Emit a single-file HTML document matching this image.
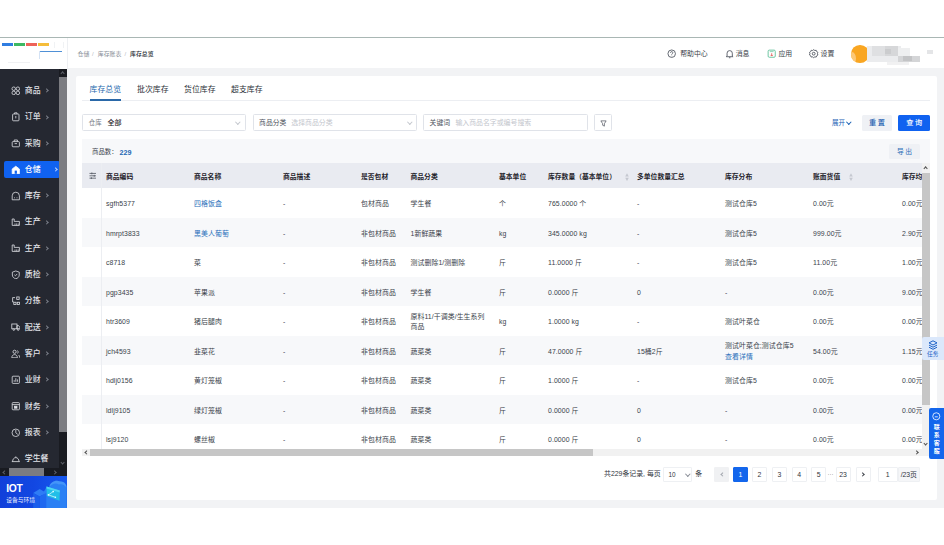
<!DOCTYPE html>
<html lang="zh-CN">
<head>
<meta charset="utf-8">
<title>库存总览</title>
<style>
*{box-sizing:border-box;margin:0;padding:0}
html,body{width:944px;height:545px;overflow:hidden;background:#fff}
body{position:relative;font-family:"Liberation Sans","Noto Sans CJK SC",sans-serif;color:#303540;font-size:6.9px;line-height:1}
.abs{position:absolute}
i{font-style:normal}
#topline{left:0;top:37px;width:944px;height:1px;background:#a9b7b4}
#hdr{left:0;top:38px;width:944px;height:30px;background:#fff}
#logo{left:0;top:38px;width:67.5px;height:31px;background:#fff;border-right:1px solid #eef0f3}
#mainbg{left:67px;top:68px;width:877px;height:440px;background:#f2f3f5}
#side{left:0;top:69px;width:67px;height:407px;background:#252831;overflow:hidden}
.mi{position:absolute;left:4px;width:56px;height:17px;border-radius:2px;color:#e1e3e8;font-size:7.9px}
.mi svg{position:absolute;left:6.6px;top:3.8px;width:9.6px;height:9.6px;fill:none;stroke:#dfe1e6;stroke-width:1}
.mi span{position:absolute;left:20.8px;top:0;line-height:17px;white-space:nowrap;font-weight:500}
.mi .chev{position:absolute;left:41.3px;top:7.3px;width:3.2px;height:3.2px;border-top:0.8px solid #7a7e88;border-right:0.8px solid #7a7e88;transform:rotate(45deg)}
.mi.act{background:#1062f0;color:#fff}
.mi.act .chev{border-color:#b9d2ff;left:49.5px}
.mi.act svg{stroke:#fff}
#card{left:75.5px;top:76px;width:861px;height:424px;background:#fff;border-radius:2px}
.tab{position:absolute;top:86px;font-size:7.9px;color:#2b2f38;white-space:nowrap}
.bc{position:absolute;top:51.6px;font-size:5.9px;color:#8a8f99;white-space:nowrap}
.inp{position:absolute;top:114.3px;height:16.8px;border:0.6px solid #e0e3e9;border-radius:1.5px;background:#fff;font-size:6.5px;line-height:16.6px;white-space:nowrap}
.inp b{font-weight:400;color:#4d525c;position:absolute;left:5.6px;font-size:6.8px}
.inp em{font-style:normal;color:#c3c6cd;position:absolute;font-size:6.9px}
.inp s{text-decoration:none;color:#1f2329;position:absolute;font-size:7px;font-weight:500}
.dchev{position:absolute;width:3.6px;height:3.6px;border-right:0.7px solid #c4c7ce;border-bottom:0.7px solid #c4c7ce;transform:rotate(45deg)}
.hi{position:absolute;top:49.2px;font-size:6.9px;color:#3a3f4a;white-space:nowrap;line-height:10px}
.hi svg{position:absolute;top:0.3px;width:9.4px;height:9.4px;fill:none;stroke:#4a4f5a;stroke-width:0.9}
#tbl{left:82px;top:163px;width:839.5px;height:285.5px;overflow:hidden;background:#fff}
.thead{position:absolute;left:0;top:0;width:100%;height:25px;background:#e9ebf1}
.th{position:absolute;top:0.6px;line-height:25.5px;font-weight:700;color:#1f232b;font-size:6.8px;white-space:nowrap}
.tr{position:absolute;left:0;width:100%;height:29.5px;background:#fff}
.tr.odd{background:#f7f8fa}
.td{position:absolute;top:1.1px;line-height:29.5px;white-space:nowrap;color:#3a3f4a;font-size:6.9px;letter-spacing:0.08px}
.td.two{line-height:9.8px;top:6.05px}
.td.two2{line-height:11.3px;top:4.55px}
.lk{color:#2a70ba}
.pg{position:absolute;top:467.3px;width:15px;height:14.7px;border:0.6px solid #eef0f3;border-radius:1px;font-size:6.9px;line-height:13.8px;text-align:center;color:#30343c;background:#fff}
</style>
</head>
<body>
<div class="abs" id="hdr"></div>
<div class="abs" id="mainbg"></div>
<div class="abs" id="topline"></div>

<!-- logo -->
<div class="abs" id="logo">
  <div class="abs" style="left:2px;top:4.5px;width:11px;height:3.6px;background:#2f7de1"></div>
  <div class="abs" style="left:14px;top:4.5px;width:11px;height:3.6px;background:#3cb862"></div>
  <div class="abs" style="left:26px;top:4.5px;width:11px;height:3.6px;background:#ee6259"></div>
  <div class="abs" style="left:38px;top:4.5px;width:11px;height:3.6px;background:#f5bd3a"></div>
  <div class="abs" style="left:39px;top:12.5px;width:23px;height:8px;border-top:1.1px solid #4f90d6;border-left:0.8px solid #d3e2f5;border-radius:1.5px 0 0 0"></div>
  <div class="abs" style="left:54px;top:4px;width:0.8px;height:6px;background:#f0f2f4"></div>
  <div class="abs" style="left:63px;top:4px;width:0.8px;height:6px;background:#f0f2f4"></div>
  <div class="abs" style="left:8px;top:24px;width:22px;height:0.7px;background:#f0f1f3"></div>
</div>

<!-- breadcrumb -->
<span class="bc" style="left:77.6px">仓储</span>
<span class="bc" style="left:92px;color:#b5b9c0">/</span>
<span class="bc" style="left:97.8px">库存账表</span>
<span class="bc" style="left:124.5px;color:#b5b9c0">/</span>
<span class="bc" style="left:130px;color:#23272f;font-weight:500">库存总览</span>

<!-- header right -->
<div class="hi" style="left:666.8px"><svg viewBox="0 0 10 10" style="left:0"><circle cx="5" cy="5" r="4"/><path d="M3.800 4a1.200 1.200 0 1 1 1.800 1c-.4.300-.6.500-.6 1M5 7.200v.5"/></svg><span style="position:absolute;left:13.4px">帮助中心</span></div>
<div class="hi" style="left:724.5px"><svg viewBox="0 0 10 10" style="left:0"><path d="M2.200 7.500V4.500a2.800 2.800 0 0 1 5.600 0v3l.8.700H1.400zM4.200 9.300h1.600"/></svg><span style="position:absolute;left:11.2px">消息</span></div>
<div class="hi" style="left:767.3px"><svg viewBox="0 0 10 10" style="left:0;stroke:#55bd93"><rect x="1.200" y="1.200" width="7.600" height="7.600" rx="1.200"/><path d="M3 2.800h4" stroke-width="0.700"/><path d="M5 4.500v2.800M3.800 6.300L5 7.500l1.200-1.200" stroke="#e0574f"/></svg><span style="position:absolute;left:11.2px">应用</span></div>
<div class="hi" style="left:809.2px"><svg viewBox="0 0 10 10" style="left:0"><path d="M5 1l1.200.9 1.500-.2.500 1.400 1.300.8-.5 1.400.5 1.400-1.300.8-.5 1.400-1.500-.2L5 9.600l-1.200-.9-1.500.2-.5-1.400L.5 6.700 1 5.300.5 3.900l1.300-.8.500-1.400 1.500.2z" transform="translate(0,-0.300)"/><circle cx="5" cy="5" r="1.500"/></svg><span style="position:absolute;left:11.4px">设置</span></div>
<!-- avatar -->
<div class="abs" style="left:851px;top:45.2px;width:17.6px;height:17.6px;border-radius:50%;background:#f9a622;overflow:hidden"><div class="abs" style="left:-3px;top:7px;width:8px;height:13px;background:#fcc878;border-radius:50%"></div></div>
<div class="abs" style="left:866.5px;top:46px;width:34px;height:15.5px;background:#ebecee"></div>
<div class="abs" style="left:872px;top:46.3px;width:13px;height:9.5px;background:#dfe0e2"></div>
<div class="abs" style="left:885px;top:46.3px;width:12.6px;height:9.5px;background:#d6d7d9"></div>
<div class="abs" style="left:885px;top:49px;width:6px;height:5px;background:#cbccce"></div>
<div class="abs" style="left:897.6px;top:47.5px;width:12px;height:8.5px;background:#eeeff0"></div>
<div class="abs" style="left:897.6px;top:56.2px;width:22.5px;height:6px;background:#d4d5d7"></div>
<div class="abs" style="left:903px;top:56.2px;width:9px;height:4.5px;background:#c3c4c6"></div>
<div class="abs" style="left:887px;top:61.5px;width:22px;height:3px;background:#f1f1f2"></div>
<div class="abs" style="left:927.3px;top:49.5px;width:5.5px;height:4.5px;background:#e4e5e7"></div>

<!-- sidebar -->
<div class="abs" id="side">
<div class="mi" style="top:13.0px"><svg viewBox="0 0 12 12"><circle cx="3.400" cy="3.400" r="2.200"/><circle cx="8.600" cy="3.400" r="2.200"/><circle cx="3.400" cy="8.600" r="2.200"/><circle cx="8.600" cy="8.600" r="2.200"/></svg><span>商品</span><i class="chev"></i></div>
<div class="mi" style="top:39.3px"><svg viewBox="0 0 12 12"><rect x="2" y="2.5" width="8" height="8.5" rx="1"/><path d="M4.5 2.5V1h3v1.5M6 5v3"/></svg><span>订单</span><i class="chev"></i></div>
<div class="mi" style="top:65.6px"><svg viewBox="0 0 12 12"><rect x="1.5" y="4.5" width="9" height="6.5" rx="1"/><path d="M4 4.5V2.5h4v2M4.5 7h3"/></svg><span>采购</span><i class="chev"></i></div>
<div class="mi act" style="top:91.9px"><svg viewBox="0 0 12 12"><path d="M1.5 11V5L6 1.5 10.5 5v6z" fill="#fff"/><rect x="4.6" y="7" width="2.8" height="4" fill="#1062f0" stroke="none"/></svg><span>仓储</span><i class="chev"></i></div>
<div class="mi" style="top:118.2px"><svg viewBox="0 0 12 12"><path d="M1.5 11V6a4.5 4.5 0 0 1 9 0v5z"/><path d="M4 8.5h1M7 8.5h1"/></svg><span>库存</span><i class="chev"></i></div>
<div class="mi" style="top:144.4px"><svg viewBox="0 0 12 12"><path d="M1.500 10.500V2.500h2.500v3h6.500v5z"/><path d="M5 10.500V8M7 10.500V8M9 10.500V8" stroke-width="0.800"/></svg><span>生产</span><i class="chev"></i></div>
<div class="mi" style="top:170.7px"><svg viewBox="0 0 12 12"><path d="M1.500 10.500V2.500h2.500v3h6.500v5z"/><path d="M5 10.500V8M7 10.500V8M9 10.500V8" stroke-width="0.800"/></svg><span>生产</span><i class="chev"></i></div>
<div class="mi" style="top:197.0px"><svg viewBox="0 0 12 12"><path d="M6 1.2l4.3 1.5v3.6c0 2.4-1.8 3.9-4.3 4.7-2.500-.8-4.300-2.300-4.300-4.700V2.700z"/><path d="M4.200 6l1.300 1.300 2.300-2.400"/></svg><span>质检</span><i class="chev"></i></div>
<div class="mi" style="top:223.3px"><svg viewBox="0 0 12 12"><path d="M5 2H2v5.500h1.500"/><rect x="7.200" y="1.200" width="3" height="3"/><rect x="3.500" y="7.800" width="2.800" height="2.800"/><rect x="7.800" y="7.800" width="2.800" height="2.800"/></svg><span>分拣</span><i class="chev"></i></div>
<div class="mi" style="top:249.6px"><svg viewBox="0 0 12 12"><rect x="1" y="2.500" width="6.500" height="6"/><path d="M7.500 4.500h2l1.500 2v2h-3.500z"/><circle cx="3.500" cy="9.500" r="1" fill="#252831"/><circle cx="9" cy="9.500" r="1" fill="#252831"/></svg><span>配送</span><i class="chev"></i></div>
<div class="mi" style="top:275.9px"><svg viewBox="0 0 12 12"><circle cx="4.500" cy="3.500" r="2"/><path d="M1 11c0-2.500 1.500-4 3.500-4s3.500 1.500 3.500 4z"/><path d="M8 2a2 2 0 0 1 0 3.500M9.500 7.500c1 .6 1.500 1.800 1.500 3.500"/></svg><span>客户</span><i class="chev"></i></div>
<div class="mi" style="top:302.2px"><svg viewBox="0 0 12 12"><rect x="1.500" y="1.500" width="9" height="9" rx="1"/><path d="M4 8.500V6.500M6 8.500V4M8 8.500V5.500"/></svg><span>业财</span><i class="chev"></i></div>
<div class="mi" style="top:328.5px"><svg viewBox="0 0 12 12"><rect x="1.500" y="2" width="9" height="9" rx="1"/><path d="M1.500 4.500h9"/><rect x="4.500" y="6.500" width="3" height="2.500" fill="#dfe1e6"/></svg><span>财务</span><i class="chev"></i></div>
<div class="mi" style="top:354.8px"><svg viewBox="0 0 12 12"><circle cx="6" cy="6" r="4.700"/><path d="M6 2.500V6l2.500 2"/></svg><span>报表</span><i class="chev"></i></div>
<div class="mi" style="top:381.1px"><svg viewBox="0 0 12 12"><path d="M1 9.500h10M2 9.500c0-3 1.800-5 4-5s4 2 4 5M6 4.500V3"/></svg><span>学生餐</span></div>
  <!-- vertical scrollbar -->
  <div class="abs" style="left:59px;top:0;width:8px;height:399px;background:#191b21"></div>
  <div class="abs" style="left:59px;top:8.3px;width:8px;height:354.7px;background:#7b7c81"></div>
  <div class="abs" style="left:61.4px;top:3.4px;width:3.2px;height:3.2px;border-top:0.9px solid #5c5f68;border-left:0.9px solid #5c5f68;transform:rotate(45deg)"></div>
  <div class="abs" style="left:61.4px;top:391.5px;width:3.2px;height:3.2px;border-bottom:0.9px solid #5c5f68;border-right:0.9px solid #5c5f68;transform:rotate(45deg)"></div>
  <!-- horizontal scrollbar -->
  <div class="abs" style="left:0;top:399px;width:67px;height:8.5px;background:#191b21"></div>
  <div class="abs" style="left:8.8px;top:399px;width:35.4px;height:8px;background:#7b7c81"></div>
  <div class="abs" style="left:3.4px;top:401.6px;width:3.2px;height:3.2px;border-bottom:0.9px solid #5c5f68;border-left:0.9px solid #5c5f68;transform:rotate(45deg)"></div>
  <div class="abs" style="left:52.5px;top:401.6px;width:3.2px;height:3.2px;border-top:0.9px solid #5c5f68;border-right:0.9px solid #5c5f68;transform:rotate(45deg)"></div>
</div>

<!-- IOT banner -->
<div class="abs" style="left:0;top:476.2px;width:67px;height:31.7px;background:linear-gradient(90deg,#1140da 0%,#1247e2 50%,#1658ee 100%);overflow:hidden">
  <svg class="abs" style="left:30px;top:0" width="37" height="32" viewBox="0 0 37 32">
    <path d="M14.500 32V20c-1.500-1-1.800-4.500.5-6 .5-2.500 2.500-3.500 4.500-3 1-5 6.500-7.500 10.800-5.500 3.500-.5 6.500 2.500 6.500 6V32z" fill="#2a80f4"/>
    <path d="M19.200 11c1-5 6.500-7.500 10.800-5.500 3.500-.5 6.500 2.500 6.500 6-2-3-5-4-7.500-3-3-2-7-1-9.800 2.500z" fill="#4b9af9" opacity="0.800"/>
    <path d="M3.200 17l6.500-3.900 6.600 3.900-6.600 3.500z" fill="#2f7df5"/>
    <path d="M3.200 17l6.500 3.500V32H3.200z" fill="#1a5eec"/>
    <path d="M9.700 20.500l6.600-3.500V32H9.700z" fill="#1f69f0"/>
    <path d="M16.500 10.500l13.300 4.100-.3 10.100-12.700-4.700z" fill="#21bfe8"/>
    <path d="M16.500 10.500l13.300 4.100-.1 2-13.200-4z" fill="#4fd6f3"/>
    <circle cx="18.400" cy="18.900" r="0.800" fill="#eafcff"/><circle cx="23.200" cy="15.600" r="0.800" fill="#eafcff"/><circle cx="25.400" cy="21.300" r="0.800" fill="#eafcff"/>
    <path d="M23.200 15.600l-4.800 3.300 7 2.400" stroke="#eafcff" stroke-width="0.700" fill="none"/>
  </svg>
  <span class="abs" style="left:6.3px;top:7.8px;font-size:10.3px;font-weight:700;color:#fff;letter-spacing:-0.3px">IOT</span>
  <span class="abs" style="left:6.3px;top:21.9px;font-size:5.75px;color:#eef3ff;white-space:nowrap">设备与环境</span>
</div>

<!-- card -->
<div class="abs" id="card"></div>
<span class="tab" style="left:89.500px;color:#2668ad">库存总览</span>
<span class="tab" style="left:137px">批次库存</span>
<span class="tab" style="left:184px">货位库存</span>
<span class="tab" style="left:231px">超支库存</span>
<div class="abs" style="left:82px;top:100.2px;width:848px;height:0.8px;background:#eceef2"></div>
<div class="abs" style="left:89.5px;top:98.8px;width:31.5px;height:2px;background:#2a68a8"></div>

<!-- filters -->
<div class="inp" style="left:82.200px;width:164.300px"><b style="font-size:6.4px;color:#767b85">仓库</b><s style="left:24.4px">全部</s><i class="dchev" style="left:152.500px;top:4.500px"></i></div>
<div class="inp" style="left:252.500px;width:164.300px"><b>商品分类</b><em style="left:37.8px">选择商品分类</em><i class="dchev" style="left:154.500px;top:4.500px"></i></div>
<div class="inp" style="left:423px;width:164.500px"><b>关键词</b><em style="left:31.4px">输入商品名字或编号搜索</em></div>
<div class="inp" style="left:593.800px;width:17.800px"><svg class="abs" style="left:5.300px;top:4.300px" width="7" height="7" viewBox="0 0 8 8" fill="none" stroke="#4a4f5a" stroke-width="0.800"><path d="M1 1h6L5 4.200V7L3 6V4.200z"/></svg></div>

<span class="abs" style="left:832px;top:119.800px;font-size:6.500px;color:#1b62b5;white-space:nowrap">展开</span>
<i class="dchev" style="left:847px;top:119.500px;border-color:#1b62b5"></i>
<div class="abs" style="left:862px;top:115px;width:30px;height:15.500px;background:#eff1f5;border-radius:1.500px;font-size:7.2px;font-weight:500;line-height:15.500px;text-align:center;color:#1b5fb0;letter-spacing:1.6px;padding-left:1.6px">重置</div>
<div class="abs" style="left:898.300px;top:115px;width:31.700px;height:15.500px;background:#1062f0;border-radius:1.500px;font-size:7.2px;font-weight:500;line-height:15.500px;text-align:center;color:#fff;letter-spacing:1.6px;padding-left:1.6px">查询</div>

<!-- info bar -->
<div class="abs" style="left:82px;top:138.500px;width:847.500px;height:24.500px;background:#f7f8fa"></div>
<span class="abs" style="left:92px;top:148.6px;font-size:6.400px;color:#3a3f4a;white-space:nowrap">商品数：</span>
<span class="abs" style="left:119.500px;top:148.9px;font-size:7.2px;color:#2468b4;font-weight:700">229</span>
<div class="abs" style="left:889px;top:143.500px;width:31px;height:15.500px;background:#eff1f5;border-radius:1.500px;font-size:6.8px;line-height:15.500px;text-align:center;color:#2a6db8;letter-spacing:1.500px;padding-left:1.500px">导出</div>

<!-- table -->
<div class="abs" id="tbl">
<div class="thead">
<span class="th" style="left:24px">商品编码</span>
<span class="th" style="left:112px">商品名称</span>
<span class="th" style="left:201px">商品描述</span>
<span class="th" style="left:279px">是否包材</span>
<span class="th" style="left:328.5px">商品分类</span>
<span class="th" style="left:417px">基本单位</span>
<span class="th" style="left:466px">库存数量（基本单位）</span>
<span class="th" style="left:555px">多单位数量汇总</span>
<span class="th" style="left:643px">库存分布</span>
<span class="th" style="left:731px">账面货值</span>
<span class="th" style="left:820px">库存均价</span>
</div>
<div class="tr" style="top:25.0px">
<span class="td" style="left:24px">sgfh5377</span>
<span class="td lk" style="left:112px">四格饭盒</span>
<span class="td" style="left:201px">-</span>
<span class="td" style="left:279px">包材商品</span>
<span class="td" style="left:328.5px">学生餐</span>
<span class="td" style="left:417px">个</span>
<span class="td" style="left:466px">765.0000 个</span>
<span class="td" style="left:555px">-</span>
<span class="td" style="left:643px">测试仓库5</span>
<span class="td" style="left:731px">0.00元</span>
<span class="td" style="left:820px">0.00元</span>
</div>
<div class="tr odd" style="top:54.5px">
<span class="td" style="left:24px">hmrpt3833</span>
<span class="td lk" style="left:112px">黑美人葡萄</span>
<span class="td" style="left:201px">-</span>
<span class="td" style="left:279px">非包材商品</span>
<span class="td" style="left:328.5px">1新鲜蔬果</span>
<span class="td" style="left:417px">kg</span>
<span class="td" style="left:466px">345.0000 kg</span>
<span class="td" style="left:555px">-</span>
<span class="td" style="left:643px">测试仓库5</span>
<span class="td" style="left:731px">999.00元</span>
<span class="td" style="left:820px">2.90元</span>
</div>
<div class="tr" style="top:84.0px">
<span class="td" style="left:24px">c8718</span>
<span class="td" style="left:112px">菜</span>
<span class="td" style="left:201px">-</span>
<span class="td" style="left:279px">非包材商品</span>
<span class="td" style="left:328.5px">测试删除1/测删除</span>
<span class="td" style="left:417px">斤</span>
<span class="td" style="left:466px">11.0000 斤</span>
<span class="td" style="left:555px">-</span>
<span class="td" style="left:643px">测试仓库5</span>
<span class="td" style="left:731px">11.00元</span>
<span class="td" style="left:820px">1.00元</span>
</div>
<div class="tr odd" style="top:113.5px">
<span class="td" style="left:24px">pgp3435</span>
<span class="td" style="left:112px">苹果派</span>
<span class="td" style="left:201px">-</span>
<span class="td" style="left:279px">非包材商品</span>
<span class="td" style="left:328.5px">学生餐</span>
<span class="td" style="left:417px">斤</span>
<span class="td" style="left:466px">0.0000 斤</span>
<span class="td" style="left:555px">0</span>
<span class="td" style="left:643px">-</span>
<span class="td" style="left:731px">0.00元</span>
<span class="td" style="left:820px">9.00元</span>
</div>
<div class="tr" style="top:143.0px">
<span class="td" style="left:24px">htr3609</span>
<span class="td" style="left:112px">猪后腿肉</span>
<span class="td" style="left:201px">-</span>
<span class="td" style="left:279px">非包材商品</span>
<span class="td two" style="left:328.5px">原料11/干调类/生生系列<br>商品</span>
<span class="td" style="left:417px">kg</span>
<span class="td" style="left:466px">1.0000 kg</span>
<span class="td" style="left:555px">-</span>
<span class="td" style="left:643px">测试叶菜仓</span>
<span class="td" style="left:731px">0.00元</span>
<span class="td" style="left:820px">0.00元</span>
</div>
<div class="tr odd" style="top:172.5px">
<span class="td" style="left:24px">jch4593</span>
<span class="td" style="left:112px">韭菜花</span>
<span class="td" style="left:201px">-</span>
<span class="td" style="left:279px">非包材商品</span>
<span class="td" style="left:328.5px">蔬菜类</span>
<span class="td" style="left:417px">斤</span>
<span class="td" style="left:466px">47.0000 斤</span>
<span class="td" style="left:555px">15桶2斤</span>
<span class="td two2" style="left:643px">测试叶菜仓;测试仓库5<br><span class="lk">查看详情</span></span>
<span class="td" style="left:731px">54.00元</span>
<span class="td" style="left:820px">1.15元</span>
</div>
<div class="tr" style="top:202.0px">
<span class="td" style="left:24px">hdlj0156</span>
<span class="td" style="left:112px">黄灯笼椒</span>
<span class="td" style="left:201px">-</span>
<span class="td" style="left:279px">非包材商品</span>
<span class="td" style="left:328.5px">蔬菜类</span>
<span class="td" style="left:417px">斤</span>
<span class="td" style="left:466px">1.0000 斤</span>
<span class="td" style="left:555px">-</span>
<span class="td" style="left:643px">测试仓库5</span>
<span class="td" style="left:731px">0.00元</span>
<span class="td" style="left:820px">0.00元</span>
</div>
<div class="tr odd" style="top:231.5px">
<span class="td" style="left:24px">ldlj9105</span>
<span class="td" style="left:112px">绿灯笼椒</span>
<span class="td" style="left:201px">-</span>
<span class="td" style="left:279px">非包材商品</span>
<span class="td" style="left:328.5px">蔬菜类</span>
<span class="td" style="left:417px">斤</span>
<span class="td" style="left:466px">0.0000 斤</span>
<span class="td" style="left:555px">0</span>
<span class="td" style="left:643px">-</span>
<span class="td" style="left:731px">0.00元</span>
<span class="td" style="left:820px">0.00元</span>
</div>
<div class="tr" style="top:261.0px">
<span class="td" style="left:24px">lsj9120</span>
<span class="td" style="left:112px">螺丝椒</span>
<span class="td" style="left:201px">-</span>
<span class="td" style="left:279px">非包材商品</span>
<span class="td" style="left:328.5px">蔬菜类</span>
<span class="td" style="left:417px">斤</span>
<span class="td" style="left:466px">0.0000 斤</span>
<span class="td" style="left:555px">0</span>
<span class="td" style="left:643px">-</span>
<span class="td" style="left:731px">0.00元</span>
<span class="td" style="left:820px">0.00元</span>
</div>
  <div class="abs" style="left:19.300px;top:0;width:0.600px;height:286px;background:#eceef2"></div>
  <svg class="abs" style="left:6.6px;top:8.6px" width="7.6" height="7.6" viewBox="0 0 8 8" fill="none" stroke="#4a4f5a" stroke-width="0.800"><path d="M0.500 1.500h7M0.500 4h7M0.500 6.500h7M3 0.500v2M5.500 3v2M2.500 5.500v2"/></svg>
  <!-- sort icons -->
  <svg class="abs" style="left:542.8px;top:9.6px" width="4" height="8.4" viewBox="0 0 4 8.4"><path d="M2 0.300L3.800 3.600H0.200zM2 8.100L3.800 4.800H0.200z" fill="#c5c8d0"/></svg>
  <svg class="abs" style="left:767.4px;top:9.6px" width="4" height="8.4" viewBox="0 0 4 8.4"><path d="M2 0.300L3.800 3.600H0.200zM2 8.100L3.800 4.800H0.200z" fill="#c5c8d0"/></svg>
</div>
<!-- table v scrollbar -->
<div class="abs" style="left:921.500px;top:163px;width:8px;height:285.500px;background:#f1f1f1"></div>
<div class="abs" style="left:921.500px;top:172.500px;width:8px;height:232px;background:#c6c6c6"></div>
<div class="abs" style="left:923.800px;top:167px;width:3.200px;height:3.200px;border-top:0.900px solid #505050;border-left:0.900px solid #505050;transform:rotate(45deg)"></div>
<div class="abs" style="left:923.800px;top:441.8px;width:3.200px;height:3.200px;border-bottom:0.900px solid #505050;border-right:0.900px solid #505050;transform:rotate(45deg)"></div>
<!-- table h scrollbar -->
<div class="abs" style="left:82px;top:448.500px;width:847.500px;height:7.500px;background:#f1f1f1"></div>
<div class="abs" style="left:90px;top:448.500px;width:502.500px;height:7.500px;background:#c6c6c6"></div>
<div class="abs" style="left:85px;top:450.500px;width:3.200px;height:3.200px;border-bottom:0.900px solid #505050;border-left:0.900px solid #505050;transform:rotate(45deg)"></div>
<div class="abs" style="left:915px;top:450.500px;width:3.200px;height:3.200px;border-top:0.900px solid #505050;border-right:0.900px solid #505050;transform:rotate(45deg)"></div>

<!-- pagination -->
<span class="abs" style="left:604px;top:471.2px;font-size:6.9px;color:#30343c;white-space:nowrap">共229条记录, 每页</span>
<div class="pg" style="left:663px;width:29px;text-align:left;padding-left:4.5px;font-size:6.4px">10<i class="dchev" style="left:21.8px;top:3.8px;border-color:#8a8e98"></i></div>
<span class="abs" style="left:695.3px;top:471.2px;font-size:6.9px;color:#30343c">条</span>
<div class="pg" style="left:713.7px;background:#f0f1f3;border-color:#f0f1f3"><i class="abs" style="left:6.2px;top:5.2px;width:3.2px;height:3.2px;border-left:0.8px solid #a4a8b0;border-bottom:0.8px solid #a4a8b0;transform:rotate(45deg)"></i></div>
<div class="pg" style="left:733px;background:#1366ec;border-color:#1366ec;color:#fff">1</div>
<div class="pg" style="left:752px">2</div>
<div class="pg" style="left:771.900px">3</div>
<div class="pg" style="left:791.700px">4</div>
<div class="pg" style="left:811.200px">5</div>
<span class="abs" style="left:827.500px;top:470.500px;font-size:6px;color:#555">···</span>
<div class="pg" style="left:835.500px">23</div>
<div class="pg" style="left:855.5px"><i class="abs" style="left:4.6px;top:5.2px;width:3.2px;height:3.2px;border-right:0.8px solid #40444c;border-top:0.8px solid #40444c;transform:rotate(45deg)"></i></div>
<div class="pg" style="left:877.600px;width:20px">1</div>
<div class="pg" style="left:897.5px;width:22.5px;background:#f5f6f8;border-color:#eef0f3;font-size:6.9px;letter-spacing:-0.1px">/23页</div>

<!-- floating widgets -->
<div class="abs" style="left:922px;top:337px;width:22px;height:22.8px;background:#dbe8fb;border-radius:2px 0 0 2px">
  <svg class="abs" style="left:6px;top:2.6px" width="10" height="10" viewBox="0 0 10 10" fill="none" stroke="#1b62c8" stroke-width="1"><path d="M5 0.800L9 2.900 5 5 1 2.900zM1 5.100l4 2.100 4-2.100M1 7.200l4 2.100 4-2.100" stroke-linejoin="round"/></svg>
  <span class="abs" style="left:5px;top:15.2px;font-size:5.7px;color:#1b62c8;white-space:nowrap">任务</span>
</div>
<div class="abs" style="left:929.3px;top:407.6px;width:14.7px;height:51px;background:#1366ec;border-radius:2px 0 0 2px;color:#fff;font-size:6px;font-weight:700;line-height:7.9px;text-align:center">
  <svg class="abs" style="left:3.2px;top:4.6px" width="8.6" height="8.6" viewBox="0 0 8 8" fill="none" stroke="#fff" stroke-width="0.750"><circle cx="4" cy="4" r="3.300"/><path d="M2.600 4.500h2.800"/></svg>
  <div style="position:absolute;left:0;top:16.6px;width:14.7px">联<br>系<br>客<br>服</div>
</div>
</body>
</html>
